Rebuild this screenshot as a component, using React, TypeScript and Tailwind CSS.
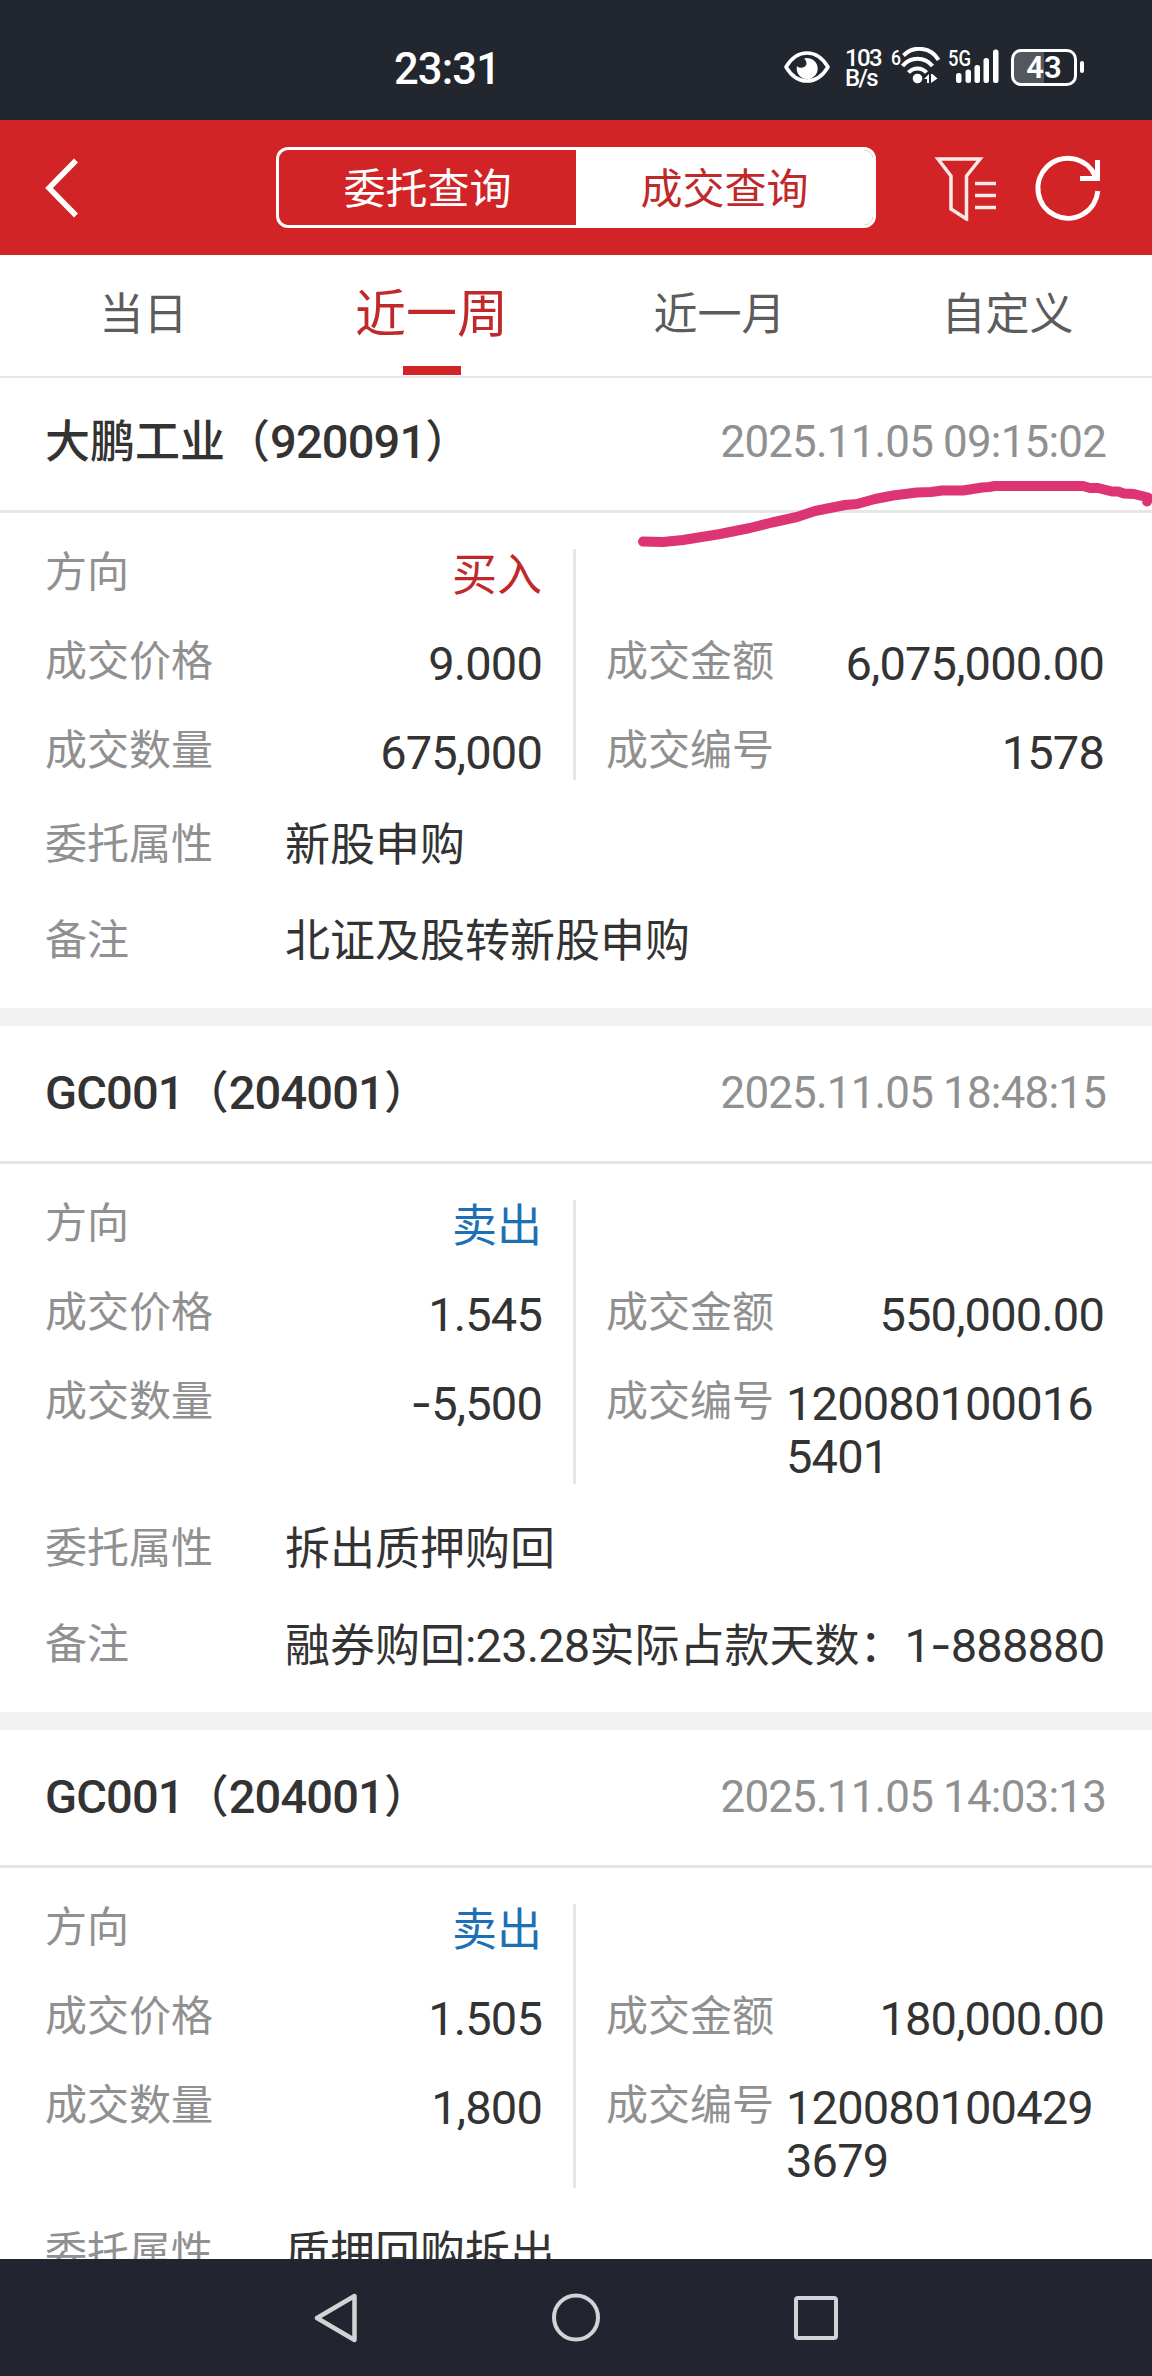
import React, { useState } from 'react';
import { clsx, type ClassValue } from 'clsx';
import { twMerge } from 'tailwind-merge';

function cn(...inputs: ClassValue[]) {
  return twMerge(clsx(inputs));
}

interface Deal {
  name: string;
  time: string;
  side: 'buy' | 'sell';
  price: string;
  volume: string;
  amount: string;
  dealNo: string;
  attribute: string;
  remark: string;
}

const deals: Deal[] = [
  {
    name: '大鹏工业（920091）',
    time: '2025.11.05 09:15:02',
    side: 'buy',
    price: '9.000',
    volume: '675,000',
    amount: '6,075,000.00',
    dealNo: '1578',
    attribute: '新股申购',
    remark: '北证及股转新股申购',
  },
  {
    name: 'GC001（204001）',
    time: '2025.11.05 18:48:15',
    side: 'sell',
    price: '1.545',
    volume: '-5,500',
    amount: '550,000.00',
    dealNo: '1200801000165401',
    attribute: '拆出质押购回',
    remark: '融券购回:23.28实际占款天数：1-888880',
  },
  {
    name: 'GC001（204001）',
    time: '2025.11.05 14:03:13',
    side: 'sell',
    price: '1.505',
    volume: '1,800',
    amount: '180,000.00',
    dealNo: '1200801004293679',
    attribute: '质押回购拆出',
    remark: '',
  },
];

// Latin runs are set a little larger than the Chinese text around them,
// and the hyphen comes from Inter because Roboto's is too short
const Mixed: React.FC<{ text: string }> = ({ text }) => (
  <>
    {text.split(/([\x20-\x2c\x2e-\x7e]+|-)/).map((part, i) =>
      i % 2 ? (
        <span key={i} className={cn('text-[1.045em] leading-none tracking-[-0.018em]', part === '-' && 'font-[Inter]')}>
          {part}
        </span>
      ) : (
        part
      )
    )}
  </>
);

const StatusBar = () => (
  <div className="h-[120px] shrink-0 bg-[#22272f] text-white flex items-center pl-[394px] pr-[68px] pt-[14px]">
    <span className="mt-[5px] text-[43.500px] leading-none font-medium tracking-[-0.02em]">23:31</span>
    <div className="ml-auto flex items-center">
      <svg width="46" height="36" viewBox="0 0 46 36" fill="none">
        <path d="M2 18C8 8 15 4 23 4s15 4 21 14c-6 10-13 14-21 14S8 28 2 18z" stroke="currentColor" strokeWidth="3.6" strokeLinejoin="round" />
        <path d="M20 9.6A10.5 10.5 0 1 1 13 17c2 3 9 2 9.500-2 .2-2-.8-4-2.500-5.400z" fill="currentColor" />
      </svg>
      <div className="ml-[15px] mt-[2px] w-[37px] text-[24px] leading-[20.500px] font-medium tracking-[-0.07em]">
        <div>103</div>
        <div>B/s</div>
      </div>
      <svg className="ml-[9px]" width="50" height="40" viewBox="0 0 50 40" fill="none">
        <text x="0" y="17.500" fontSize="21" fontWeight="500" fill="currentColor" textLength="10" lengthAdjust="spacingAndGlyphs">6</text>
        <g stroke="currentColor" strokeWidth="4">
          <path d="M12.500 8.500a22 22 0 0 1 35 4.500" />
          <path d="M11.500 19a19 19 0 0 1 30 0" />
          <path d="M17.500 25.500a12 12 0 0 1 18 0" />
        </g>
        <circle cx="26.500" cy="31.500" r="4.800" fill="currentColor" />
        <path d="M33 32l5-5v9h-2v-4zM40 36v-9h1.500l5 4.500z" fill="currentColor" />
      </svg>
      <svg className="ml-[7px]" width="52" height="40" viewBox="0 0 52 40">
        <text x="0" y="18.500" fontSize="21.500" fontWeight="500" fill="currentColor" textLength="23" lengthAdjust="spacingAndGlyphs">5G</text>
        <g fill="currentColor">
          <rect x="8" y="26" width="5.500" height="10" rx="2.500" />
          <rect x="17.500" y="22.500" width="5.500" height="13.500" rx="2.500" />
          <rect x="26.500" y="18" width="5.500" height="18" rx="2.500" />
          <rect x="35.500" y="11" width="5.500" height="25" rx="2.500" />
          <rect x="45" y="2.500" width="5.500" height="33.500" rx="2.500" />
        </g>
      </svg>
      <div className="ml-[11px] w-[66px] h-[37px] rounded-[10px] border-3 border-white bg-linear-to-r from-[#54575e] from-50% to-transparent to-50% flex items-center justify-center text-[31px] leading-none font-semibold">
        43
      </div>
      <div className="ml-[3px] w-[4px] h-[12px] rounded-full bg-white" />
    </div>
  </div>
);

const Header = () => {
  const [mode, setMode] = useState('deal');
  const modes = [
    { id: 'order', label: '委托查询' },
    { id: 'deal', label: '成交查询' },
  ];

  return (
    <header className="h-[135px] shrink-0 bg-[#d22426] text-white flex items-center pl-[44px] pr-[49px]">
      <button aria-label="返回">
        <svg width="36" height="60" viewBox="0 0 36 60" fill="none" stroke="currentColor" strokeWidth="5.500">
          <path d="M32 2.500L5 30l27 27.500" />
        </svg>
      </button>
      <div className="ml-[196px] w-[600px] h-[81px] rounded-[12px] border-3 border-white flex overflow-hidden">
        {modes.map((m) => (
          <button
            key={m.id}
            onClick={() => setMode(m.id)}
            className={cn('flex-1 pt-[4px] text-[42px] leading-none', mode === m.id && 'bg-white text-[#c0292a]')}
          >
            {m.label}
          </button>
        ))}
      </div>
      <button className="ml-[58px]" aria-label="筛选">
        <svg width="64" height="66" viewBox="0 0 64 66" fill="none" stroke="currentColor" strokeWidth="3.500" className="opacity-90">
          <path d="M4 4h42L32.500 21v43L17 54V21z" />
          <path d="M41 28.500h21M41 40.500h21M41 52.500h21" />
        </svg>
      </button>
      <button className="ml-[35px]" aria-label="刷新">
        <svg width="70" height="68" viewBox="0 0 70 68" fill="none" stroke="currentColor" strokeWidth="5">
          <path d="M64.800 37A30 30 0 1 1 62.500 22.500" />
          <path d="M47 24.500h17.500V6" />
        </svg>
      </button>
    </header>
  );
};

const PeriodTabs = () => {
  const [active, setActive] = useState('近一周');

  return (
    <nav className="h-[123px] -mb-[3px] shrink-0 bg-white border-b-2 border-[#e6e6e6] flex">
      {['当日', '近一周', '近一月', '自定义'].map((label) => (
        <button
          key={label}
          onClick={() => setActive(label)}
          className={cn(
            'relative flex-1 pb-px pr-px text-[44px] leading-none text-[#5c5c5c]',
            active === label && 'text-[51px] text-[#c0292a]'
          )}
        >
          {label}
          {active === label && <span className="absolute bottom-[1px] left-1/2 -translate-x-1/2 w-[58px] h-[9px] bg-[#d22426]" />}
        </button>
      ))}
    </nav>
  );
};

const Field: React.FC<{ label: string; value: string; className?: string }> = ({ label, value, className }) => (
  <div className="flex items-start justify-between min-h-[53px]">
    <span className="w-[180px] shrink-0 text-[42px] leading-[47px] text-[#909090]">{label}</span>
    <span className={cn('text-[45px] leading-[53px] break-all', className)}>
      <Mixed text={value} />
    </span>
  </div>
);

const WideField: React.FC<{ label: string; value: string }> = ({ label, value }) => (
  <div className="h-[96px] pt-[2px] flex items-center">
    <span className="w-[240px] shrink-0 text-[42px] leading-none text-[#909090]">{label}</span>
    <span className="text-[45px] leading-none whitespace-nowrap">
      <Mixed text={value} />
    </span>
  </div>
);

const DealCard: React.FC<{ deal: Deal }> = ({ deal }) => (
  <section className="text-[#333]">
    <div className="h-[138px] border-b-3 border-[#e6e6e6] pl-[45px] pr-[46px] flex items-center justify-between">
      <h2 className="-mt-[2px] text-[45px] leading-none font-medium">
        <Mixed text={deal.name} />
      </h2>
      <time className="text-[42px] leading-none text-[#909090]">
        <Mixed text={deal.time} />
      </time>
    </div>
    <div className="pt-[36px] flex">
      <div className="w-[576px] border-r-3 border-[#e6e6e6] pl-[45px] pr-[31px] flex flex-col gap-[36px]">
        <Field
          label="方向"
          value={deal.side === 'buy' ? '买入' : '卖出'}
          className={deal.side === 'buy' ? 'text-[#c0292a]' : 'text-[#1f6fb5]'}
        />
        <Field label="成交价格" value={deal.price} />
        <Field label="成交数量" value={deal.volume} />
      </div>
      <div className="flex-1 pl-[30px] pr-[48px] pt-[89px] flex flex-col gap-[36px]">
        <Field label="成交金额" value={deal.amount} />
        <Field label="成交编号" value={deal.dealNo} />
      </div>
    </div>
    <div className="pt-[16px] pb-[20px] pl-[45px]">
      <WideField label="委托属性" value={deal.attribute} />
      <WideField label="备注" value={deal.remark} />
    </div>
  </section>
);

const SystemNav = () => (
  <div className="h-[117px] shrink-0 bg-[#222430] flex items-center justify-center gap-[190px]">
    <svg width="50" height="50" viewBox="0 0 50 50" fill="none" stroke="#d2d3d5" strokeWidth="4.500" strokeLinejoin="round">
      <path d="M43.500 3v44L6 25z" />
    </svg>
    <svg width="50" height="50" viewBox="0 0 50 50" fill="none" stroke="#d2d3d5" strokeWidth="4">
      <circle cx="25" cy="24.500" r="22" />
    </svg>
    <svg width="50" height="50" viewBox="0 0 50 50" fill="none" stroke="#d2d3d5" strokeWidth="4">
      <rect x="5" y="5" width="40" height="40" rx="2" />
    </svg>
  </div>
);

export default function App() {
  return (
    <div className="relative w-[1152px] h-[2376px] overflow-hidden bg-white flex flex-col font-[Roboto,'Noto_Sans_CJK_SC',sans-serif]">
      <StatusBar />
      <Header />
      <PeriodTabs />
      <main className="flex-1 min-h-0 overflow-hidden flex flex-col">
        {deals.map((deal, i) => (
          <React.Fragment key={i}>
            {i > 0 && <div className="h-[18px] shrink-0 bg-[#f1f1f1]" />}
            <DealCard deal={deal} />
          </React.Fragment>
        ))}
      </main>
      <SystemNav />

      {/* Marker stroke under the first timestamp */}
      <svg
        className="absolute left-0 top-[470px] pointer-events-none"
        width="1152"
        height="90"
        viewBox="0 470 1152 90"
        fill="none"
        stroke="#dc3474"
        strokeWidth="10"
        strokeLinecap="round"
        strokeLinejoin="round"
      >
        <path d="M643 541.500L663 542L683 540L720 534L750 528L772 522.500L797 517L815 511L845 505L857 504L875 499L893 495.500L917 492.500L931 492L942 490.500L963 490.500L982 487.500L989 487L995 486H1083L1090 488H1098L1112 491.500L1118 491.500L1124 493.500L1134 494L1148 497.500L1147 501.500" />
      </svg>
    </div>
  );
}
